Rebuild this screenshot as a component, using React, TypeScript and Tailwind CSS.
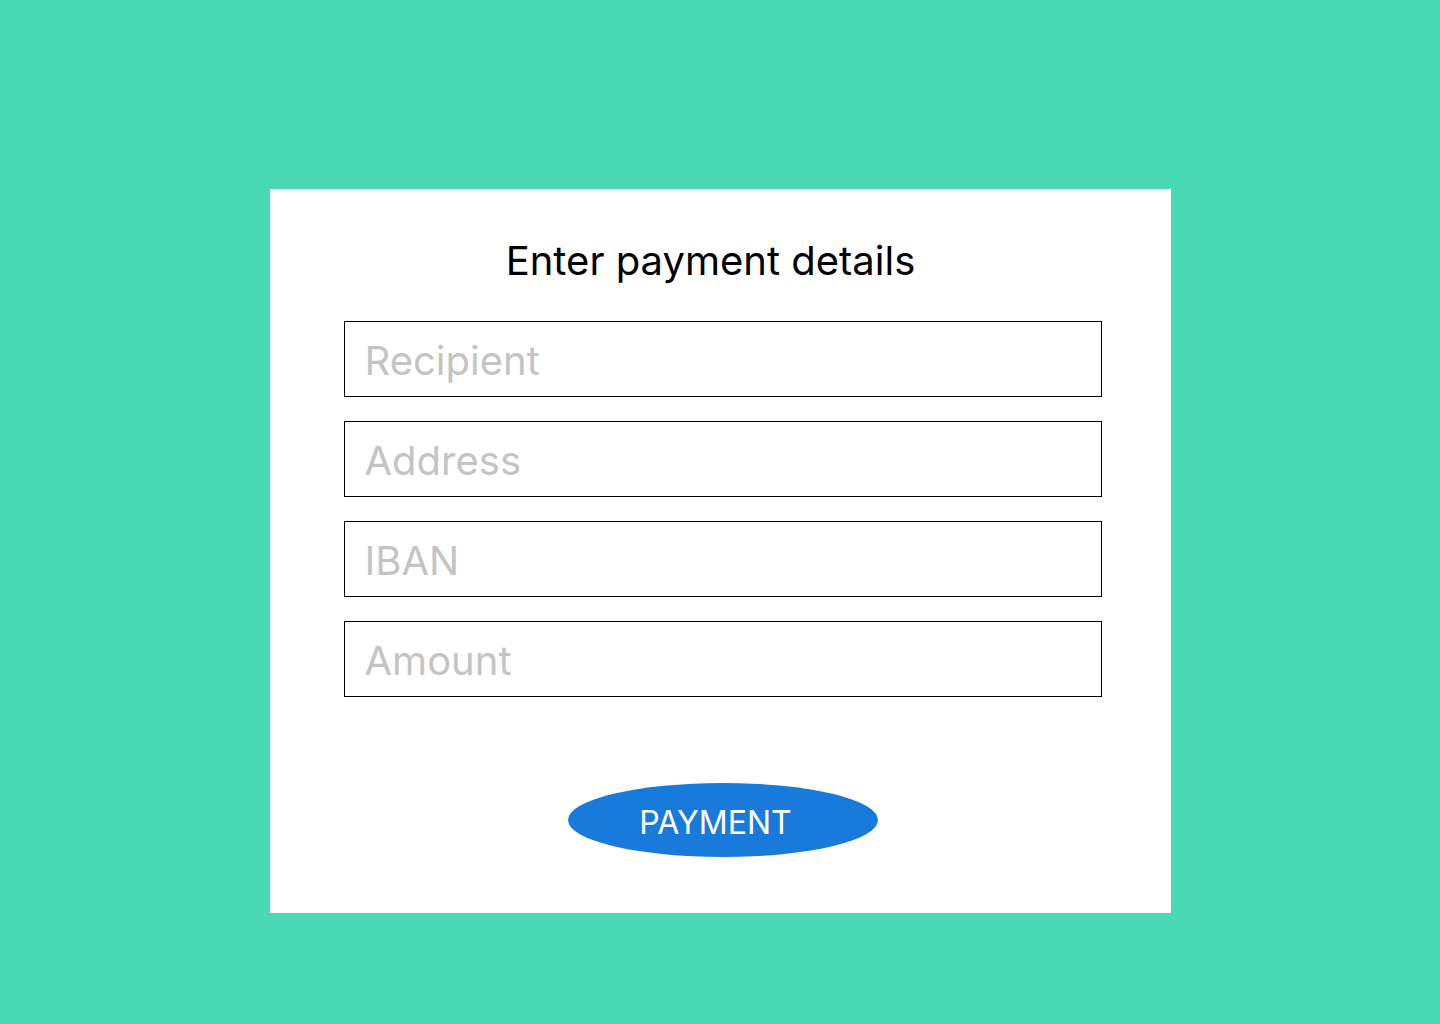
const fields = ['Recipient', 'Address', 'IBAN', 'Amount'];

export default function App() {
  return (
    <div className="min-h-[1024px] w-full bg-[#4ad9b5] pt-[189px] font-['Inter',sans-serif]">
      <div className="mx-auto h-[724px] w-[901px] bg-white pt-[48px]">
        <h1 className="pr-[19px] text-center text-[40px] font-normal leading-[48px] text-black">
          Enter payment details
        </h1>
        <div className="ml-[74px] mt-[36px] flex w-[758px] flex-col gap-[24px]">
          {fields.map((f) => (
            <input
              key={f}
              type="text"
              placeholder={f}
              className="h-[76px] w-full border border-black bg-white px-[20px] pt-[2px] text-[40px] text-black outline-none placeholder:text-[#c4c4c4]"
            />
          ))}
        </div>
        <div className="ml-[74px] mt-[86px] flex w-[758px] justify-center">
          <button
            type="button"
            className="flex h-[74px] w-[310px] items-center justify-center rounded-[50%] bg-[#187bdb] pr-[14px] pt-[5px] text-[32px] leading-none text-white"
          >
            PAYMENT
          </button>
        </div>
      </div>
    </div>
  );
}
